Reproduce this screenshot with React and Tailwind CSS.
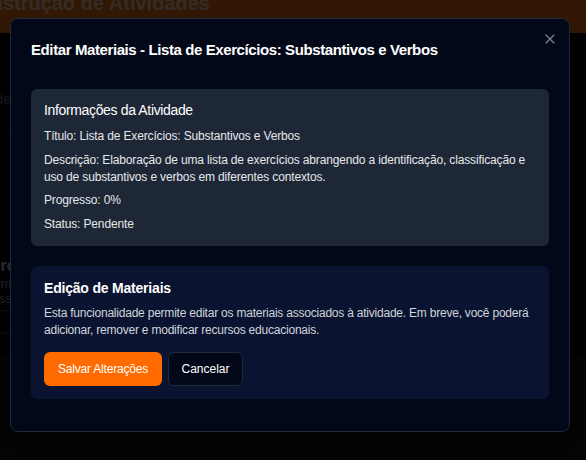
import React from 'react';
import { X } from 'lucide-react';

// Background page (dimmed by the overlay)
const BackgroundPage = () => (
  <div className="flex flex-col w-full h-full bg-[#141414]">
    <div className="h-[33px] bg-[#f97316] overflow-hidden">
      <h1 className="-mt-[12px] -ml-[36px] text-[20px] font-bold text-[#ffd9bd] whitespace-nowrap">
        Construção de Atividades
      </h1>
    </div>
    <div className="h-[99px] bg-[#050507] pt-[55px] text-[15px] text-gray-500">
      <span className="-ml-[5px]">de</span>
    </div>
    <div className="h-[225px] bg-[#0c0c0d] border-t border-[#222] pt-[122px] text-gray-400">
      <p className="-ml-[28px] text-[16px] font-bold text-gray-300 leading-[22px] whitespace-nowrap">Exercícios</p>
      <p className="-ml-[12px] text-[12px] leading-[15px]">Term</p>
      <p className="-ml-[16px] text-[12px] leading-[15px]">class</p>
      <div className="mt-[3px] w-[32px] -ml-[2px] h-[24px] rounded-md border border-gray-600"></div>
    </div>
  </div>
);

export default function App() {
  return (
    <div
      className="relative w-[586px] h-[460px] overflow-hidden bg-black"
      style={{ fontFamily: '"Liberation Sans", Arial, sans-serif' }}
    >
      <BackgroundPage />

      {/* Overlay */}
      <div className="absolute inset-0 bg-black/80"></div>

      {/* Dialog */}
      <div className="absolute left-[10px] top-[18px] w-[560px] h-[414px] rounded-lg border border-[#1e293b] bg-[#020817] px-[20px] pt-[22px] shadow-lg">
        <button className="absolute right-[11px] top-[12px] text-[#94a3b8] opacity-80">
          <X className="w-4 h-4" strokeWidth={1.8} />
        </button>

        <h2 className="text-[15px] font-bold text-white leading-[18px] tracking-[-0.4px]">
          Editar Materiais - Lista de Exercícios: Substantivos e Verbos
        </h2>

        <div className="mt-[30px] flex flex-col gap-[20px]">
          {/* Informações da Atividade */}
          <div className="rounded-md bg-[#1e2736] px-[13px] pt-[12px] pb-[14px] h-[157px]">
            <h3 className="text-[14px] text-white leading-[18px] tracking-[-0.35px] font-medium">
              Informações da Atividade
            </h3>
            <div className="mt-[9px] flex flex-col gap-[6.5px] text-[12px] leading-[17px] text-[#e5e7eb] tracking-[-0.15px]">
              <p>Título: Lista de Exercícios: Substantivos e Verbos</p>
              <p>
                Descrição: Elaboração de uma lista de exercícios abrangendo a identificação, classificação e uso de
                substantivos e verbos em diferentes contextos.
              </p>
              <p>Progresso: 0%</p>
              <p>Status: Pendente</p>
            </div>
          </div>

          {/* Edição de Materiais */}
          <div className="rounded-md bg-[#0a1330] px-[13px] pt-[13px] h-[133px]">
            <h3 className="text-[14px] font-bold text-white leading-[18px] tracking-[-0.2px]">
              Edição de Materiais
            </h3>
            <p className="mt-[8px] text-[12px] leading-[17px] text-[#d1d5db] tracking-[-0.22px]">
              Esta funcionalidade permite editar os materiais associados à atividade. Em breve, você poderá
              adicionar, remover e modificar recursos educacionais.
            </p>
            <div className="mt-[13px] flex gap-[6px]">
              <button className="h-[34px] w-[118px] rounded-md bg-[#ff6b00] text-[12px] text-white tracking-[-0.2px]">
                Salvar Alterações
              </button>
              <button className="h-[34px] w-[75px] rounded-md border border-[#1e293b] bg-[#020817] text-[12px] text-white">
                Cancelar
              </button>
            </div>
          </div>
        </div>
      </div>
    </div>
  );
}
